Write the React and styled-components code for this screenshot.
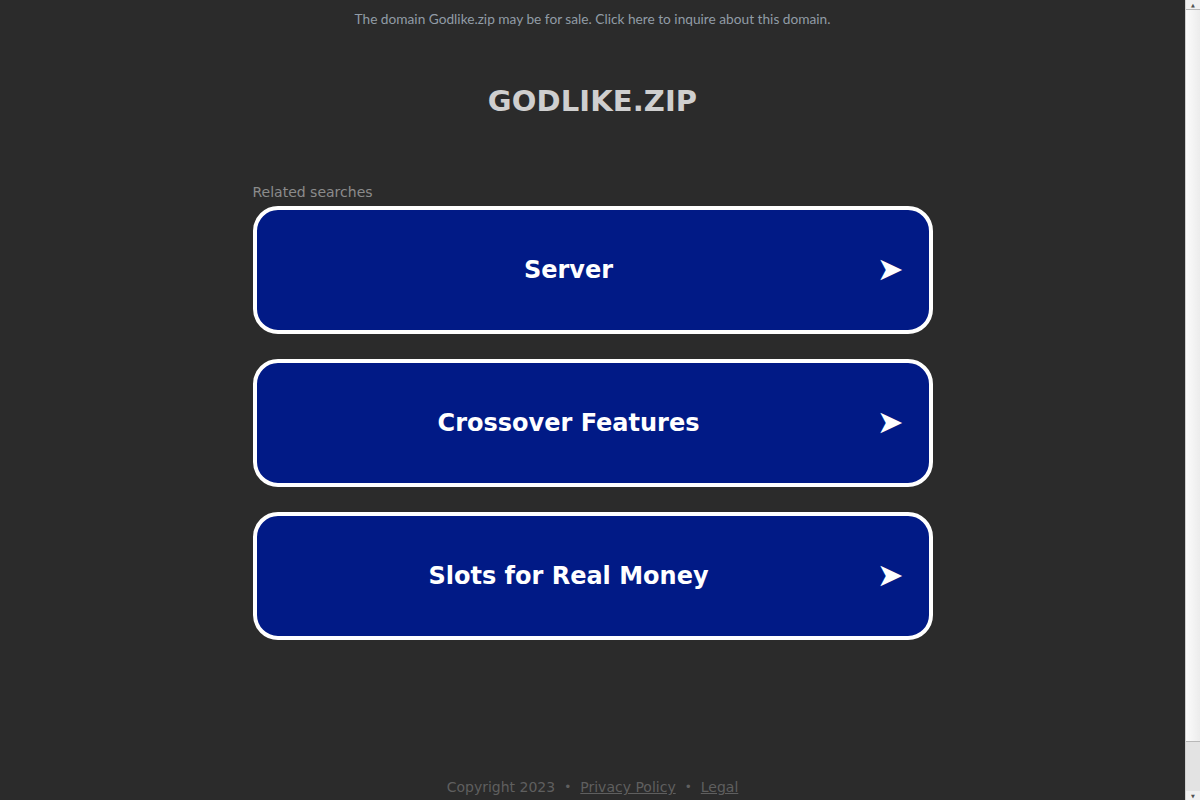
import styled, { createGlobalStyle } from "styled-components";

const searches = ["Server", "Crossover Features", "Slots for Real Money"];

export default function App() {
  return (
    <>
      <GlobalStyle />
      <Page>
        <TopBar>
          <TopLink href="#">
            The domain Godlike.zip may be for sale. Click here to inquire about this domain.
          </TopLink>
        </TopBar>
        <Title>GODLIKE.ZIP</Title>
        <Main>
          <Label>Related searches</Label>
          <List>
            {searches.map(s => (
              <Card key={s} href="#">
                <CardText>{s}</CardText>
                <Arrow>➤</Arrow>
              </Card>
            ))}
          </List>
        </Main>
        <Footer>
          <span>Copyright 2023</span>
          <Dot>•</Dot>
          <FootLink href="#">Privacy Policy</FootLink>
          <Dot>•</Dot>
          <FootLink href="#">Legal</FootLink>
        </Footer>
      </Page>
      <Scrollbar>
        <ScrollBtn>▲</ScrollBtn>
        <Thumb />
        <Track />
        <ScrollBtn>▼</ScrollBtn>
      </Scrollbar>
    </>
  );
}

const GlobalStyle = createGlobalStyle`
  html, body {
    margin: 0;
    padding: 0;
    background: #2b2b2b;
  }
  body {
    font-family: "DejaVu Sans", sans-serif;
    overflow-x: hidden;
  }
`;

const Page = styled.div`
  width: 1185px;
  display: flex;
  flex-direction: column;
  align-items: center;
  min-height: 852px;
`;

const TopBar = styled.div`
  width: 100%;
  display: flex;
  justify-content: center;
  padding-top: 11px;
`;

const TopLink = styled.a`
  font-family: Lato, "Open Sans", sans-serif;
  font-size: 13.7px;
  line-height: 16px;
  color: #919ca6;
  text-decoration: none;
`;

const Title = styled.h1`
  margin: 0;
  margin-top: 57px;
  font-size: 29px;
  line-height: 34px;
  font-weight: bold;
  color: #cfcfcf;
  letter-spacing: 0.1px;
`;

const Main = styled.div`
  width: 680px;
  margin-top: 66px;
  display: flex;
  flex-direction: column;
`;

const Label = styled.div`
  font-size: 14px;
  line-height: 17px;
  color: #8b8b8b;
  margin-bottom: 5px;
`;

const List = styled.div`
  display: flex;
  flex-direction: column;
  gap: 25px;
`;

const Card = styled.a`
  display: flex;
  align-items: center;
  height: 128px;
  box-sizing: border-box;
  padding: 0 25px 0 27px;
  background: #011a86;
  border: 4px solid #ffffff;
  border-radius: 25px;
  text-decoration: none;
  color: #ffffff;
`;

const CardText = styled.span`
  flex: 1;
  text-align: center;
  font-size: 24px;
  font-weight: bold;
`;

const Arrow = styled.span`
  width: 50px;
  text-align: right;
  font-size: 32px;
  line-height: 1;
  margin-top: -2px;
  color: #ffffff;
`;

const Footer = styled.div`
  margin-top: auto;
  padding-bottom: 56px;
  display: flex;
  align-items: center;
  gap: 9px;
  font-size: 14px;
  line-height: 17px;
  color: #5f5f5f;
`;

const Dot = styled.span`
  font-size: 12px;
`;

const FootLink = styled.a`
  color: #5f5f5f;
  text-decoration: underline;
`;

const Scrollbar = styled.div`
  position: fixed;
  top: 0;
  right: 0;
  width: 14px;
  height: 100vh;
  display: flex;
  flex-direction: column;
  background: #e3e3e3;
  border-left: 1px solid #d0d0d0;
`;

const ScrollBtn = styled.div`
  height: 9px;
  display: flex;
  align-items: center;
  justify-content: center;
  font-size: 5px;
  color: #505050;
  background: #f0f0f0;
`;

const Thumb = styled.div`
  height: 731px;
  border-top: 1px solid #b8b8b8;
  border-bottom: 1px solid #b8b8b8;
  background: linear-gradient(to right, #fbfbfb, #ececec);
`;

const Track = styled.div`
  flex: 1;
  background: #e3e3e3;
`;
